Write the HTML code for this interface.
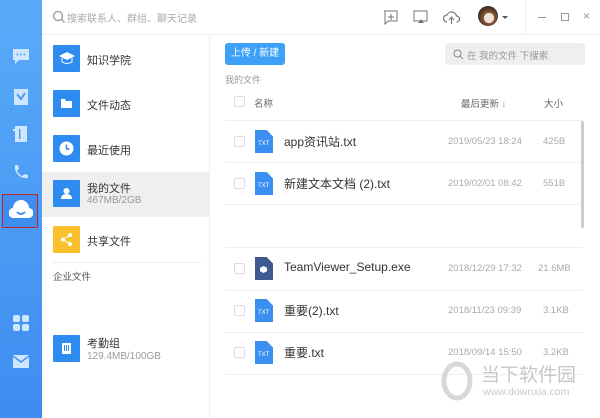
<!DOCTYPE html>
<html><head><meta charset="utf-8"><style>
*{margin:0;padding:0;box-sizing:border-box}
body{width:600px;height:418px;overflow:hidden;background:#fff;font-family:"Liberation Sans","Noto Sans CJK SC",sans-serif;position:relative;color:#333}
.a{position:absolute}
.side{left:0;top:0;width:42px;height:418px;background:linear-gradient(#59abf9,#3e8cf1)}
.ic{position:absolute;left:11px;width:20px;height:18px}
.top{left:42px;top:0;width:558px;height:35px;border-bottom:1px solid #eee;background:#fff}
.mid{left:42px;top:35px;width:168px;height:383px;border-right:1px solid #eee}
.mi{position:absolute;left:11px;width:27px;height:27px;background:#2e8cf0;border-radius:1px}
.mt{position:absolute;left:45px;font-size:11px;color:#333}
.ms{position:absolute;left:45px;font-size:10px;color:#999}
.cb{position:absolute;left:234px;width:11px;height:11px;border:1px solid #ddd;border-radius:2px;background:#fff}
.ln{position:absolute;left:225px;width:358px;height:1px;background:#eee}
.fi{position:absolute;left:255px;width:18px;height:23px;background:#3a8ff0;clip-path:polygon(0 0,65% 0,100% 28%,100% 100%,0 100%)}
.fi span{position:absolute;left:3px;top:11px;font-size:6px;color:#fff}
.fn{position:absolute;left:284px;font-size:12px;color:#333}
.fd{position:absolute;left:448px;font-size:9.5px;color:#aaa}
.fs{position:absolute;font-size:9.5px;color:#aaa}
</style></head><body>
<div class="a side">
 <svg class="ic" style="top:47px" viewBox="0 0 20 18"><path d="M2 2h16v11H8l-4 4v-4H2z" fill="#cfe6ff"/><circle cx="6.5" cy="7.5" r="1" fill="#59abf9"/><circle cx="10" cy="7.5" r="1" fill="#59abf9"/><circle cx="13.5" cy="7.5" r="1" fill="#59abf9"/></svg>
 <svg class="ic" style="top:88px" viewBox="0 0 20 18"><path d="M3 1h14v16H3z" fill="#cfe6ff"/><path d="M6 6l4 5 4-6" stroke="#4a9cf5" stroke-width="2" fill="none"/></svg>
 <svg class="ic" style="top:125px" viewBox="0 0 20 18"><rect x="4" y="1" width="12" height="16" fill="#cfe6ff"/><rect x="2" y="4" width="3" height="2" fill="#cfe6ff"/><rect x="8" y="4" width="1.5" height="10" fill="#4a9cf5"/></svg>
 <svg class="ic" style="top:163px" viewBox="0 0 20 18"><path d="M4 2l3 0 1 4-2 1.5c1 2.5 3 4.5 5.5 5.5L13 11l4 1v3c-8 1-14-5-13-13z" fill="#cfe6ff"/></svg>
 <div class="a" style="left:2px;top:194px;width:36px;height:34px;border:1.5px solid #c0272d;background:#3d8ef0"></div>
 <svg class="a" style="left:9px;top:200px" width="24" height="20" viewBox="0 0 24 20"><path d="M5 18a5 5 0 0 1-1-10 8 8 0 0 1 16 0 5 5 0 0 1-1 10z" fill="#fff"/><path d="M8 12q4 4 8 0" stroke="#3d8ef0" stroke-width="1.8" fill="none"/></svg>
 <svg class="ic" style="top:315px" viewBox="0 0 20 18"><rect x="2" y="0" width="7" height="7" rx="2" fill="#cfe6ff"/><rect x="11" y="0" width="7" height="7" rx="2" fill="#cfe6ff"/><rect x="2" y="9" width="7" height="7" rx="2" fill="#cfe6ff"/><rect x="11" y="9" width="7" height="7" rx="2" fill="#cfe6ff"/></svg>
 <svg class="ic" style="top:353px" viewBox="0 0 20 18"><rect x="2" y="2" width="16" height="13" fill="#cfe6ff"/><path d="M2 3l8 6 8-6" stroke="#4a8ff3" stroke-width="1.5" fill="none"/></svg>
</div>
<div class="a top">
 <svg class="a" style="left:10px;top:10px" width="14" height="14"><circle cx="6" cy="6" r="4.5" stroke="#999" stroke-width="1.3" fill="none"/><path d="M9.5 9.5l3 3" stroke="#999" stroke-width="1.3"/></svg>
 <div class="a" style="left:25px;top:10px;font-size:10px;color:#aaa">搜索联系人、群组、聊天记录</div>
 <svg class="a" style="left:341px;top:10px" width="16" height="15"><path d="M1 1h13v10H5l-3 3V1" stroke="#777" fill="none"/><path d="M8 4v6M5 7h6" stroke="#777"/></svg>
 <svg class="a" style="left:371px;top:10px" width="16" height="15"><rect x="1" y="1" width="13" height="10" stroke="#777" fill="none"/><path d="M5 13l3-4 3 4z" fill="#777"/></svg>
 <svg class="a" style="left:401px;top:10px" width="17" height="15"><path d="M4 12a3.5 3.5 0 0 1 0-7 5 5 0 0 1 9.5 1 3 3 0 0 1 0 6" stroke="#777" fill="none" stroke-width="1.2"/><path d="M8.5 7v7M6 10l2.5-3 2.5 3" stroke="#777" fill="none"/></svg>
 <div class="a" style="left:436px;top:6px;width:20px;height:20px;border-radius:50%;background:radial-gradient(circle at 55% 60%,#f1e2d6 30%,#8a5a3a 32%,#3a2a20 70%)"></div>
 <div class="a" style="left:460px;top:16px;border:3px solid transparent;border-top:3px solid #555"></div>
 <div class="a" style="left:483px;top:0;width:1px;height:35px;background:#eee"></div>
 <div class="a" style="left:496px;top:17px;width:8px;height:1px;background:#999"></div>
 <div class="a" style="left:519px;top:13px;width:8px;height:8px;border:1px solid #999"></div>
 <div class="a" style="left:541px;top:9px;font-size:12px;color:#999">×</div>
</div>
<div class="a mid">
 <div class="mi" style="top:10px"><svg width="27" height="27"><path d="M6 11l8-4 8 4-8 4z" fill="#fff"/><path d="M9 13v4q5 3 10 0v-4" stroke="#fff" fill="none"/></svg></div>
 <div class="mt" style="top:17px">知识学院</div>
 <div class="mi" style="top:55px"><svg width="27" height="27"><path d="M8 9h4l1 2h6v7H8z" fill="#fff"/></svg></div>
 <div class="mt" style="top:62px">文件动态</div>
 <div class="mi" style="top:100px"><svg width="27" height="27"><circle cx="13.5" cy="13.5" r="7" fill="#fff"/><path d="M13.5 9.5v4.5h3" stroke="#2e8cf0" stroke-width="1.5" fill="none"/></svg></div>
 <div class="mt" style="top:107px">最近使用</div>
 <div class="a" style="left:0;top:137px;width:167px;height:45px;background:#efefef"></div>
 <div class="mi" style="top:145px"><svg width="27" height="27"><circle cx="13.5" cy="11" r="3" fill="#fff"/><path d="M8 19q0-5 5.5-5t5.5 5z" fill="#fff"/></svg></div>
 <div class="mt" style="top:145px">我的文件</div>
 <div class="ms" style="top:160px">467MB/2GB</div>
 <div class="mi" style="top:191px;background:#fbc02d"><svg width="27" height="27"><circle cx="17" cy="9" r="2" fill="#fff"/><circle cx="10" cy="13.5" r="2" fill="#fff"/><circle cx="17" cy="18" r="2" fill="#fff"/><path d="M17 9l-7 4.5 7 4.5" stroke="#fff" fill="none"/></svg></div>
 <div class="mt" style="top:198px">共享文件</div>
 <div class="a" style="left:11px;top:227px;width:148px;height:1px;background:#eee"></div>
 <div class="a" style="left:11px;top:234px;font-size:9.5px;color:#555">企业文件</div>
 <div class="mi" style="top:300px"><svg width="27" height="27"><rect x="9" y="8" width="9" height="11" fill="#fff"/><path d="M11.5 10v6M13.5 10v6M15.5 10v6" stroke="#2e8cf0"/></svg></div>
 <div class="mt" style="top:300px">考勤组</div>
 <div class="ms" style="top:316px">129.4MB/100GB</div>
</div>
<div class="a" style="left:225px;top:43px;width:60px;height:22px;background:#3da2f7;border-radius:3px;color:#fff;font-size:10px;text-align:center;line-height:22px">上传 / 新建</div>
<div class="a" style="left:445px;top:43px;width:140px;height:22px;background:#efefef;border-radius:3px"></div>
<svg class="a" style="left:453px;top:49px" width="11" height="11"><circle cx="4.5" cy="4.5" r="3.5" stroke="#888" fill="none"/><path d="M7 7l3 3" stroke="#888"/></svg>
<div class="a" style="left:467px;top:48px;font-size:9.5px;color:#999">在 我的文件 下搜索</div>
<div class="a" style="left:225px;top:73px;font-size:9px;color:#999">我的文件</div>
<div class="cb" style="top:96px"></div>
<div class="a" style="left:254px;top:96px;font-size:9.5px;color:#666">名称</div>
<div class="a" style="left:461px;top:96px;font-size:9.5px;color:#666">最后更新 <span style="color:#3da2f7">↓</span></div>
<div class="a" style="left:544px;top:96px;font-size:9.5px;color:#666">大小</div>
<div class="ln" style="top:120px"></div>
<div class="ln" style="top:162px"></div>
<div class="ln" style="top:204px"></div>
<div class="ln" style="top:247px"></div>
<div class="ln" style="top:290px"></div>
<div class="ln" style="top:332px"></div>
<div class="ln" style="top:374px"></div>
<div class="a" style="left:581px;top:121px;width:3px;height:107px;background:#ccc;border-radius:2px"></div>
<div class="cb" style="top:136px"></div><div class="fi" style="top:130px"><span>TXT</span></div>
<div class="fn" style="top:133px">app资讯站.txt</div><div class="fd" style="top:136px">2019/05/23 18:24</div><div class="fs" style="left:543px;top:136px">425B</div>
<div class="cb" style="top:178px"></div><div class="fi" style="top:172px"><span>TXT</span></div>
<div class="fn" style="top:175px">新建文本文档 (2).txt</div><div class="fd" style="top:178px">2019/02/01 08:42</div><div class="fs" style="left:543px;top:178px">551B</div>
<div class="cb" style="top:263px"></div><div class="fi" style="top:257px;background:#3f5a8e"><span style="left:5px;top:9px;width:7px;height:7px;background:#fff;clip-path:polygon(50% 0,100% 25%,100% 75%,50% 100%,0 75%,0 25%)"></span></div>
<div class="fn" style="top:260px">TeamViewer_Setup.exe</div><div class="fd" style="top:263px">2018/12/29 17:32</div><div class="fs" style="left:538px;top:263px">21.6MB</div>
<div class="cb" style="top:305px"></div><div class="fi" style="top:299px"><span>TXT</span></div>
<div class="fn" style="top:302px">重要(2).txt</div><div class="fd" style="top:305px">2018/11/23 09:39</div><div class="fs" style="left:543px;top:305px">3.1KB</div>
<div class="cb" style="top:347px"></div><div class="fi" style="top:341px"><span>TXT</span></div>
<div class="fn" style="top:344px">重要.txt</div><div class="fd" style="top:347px">2018/09/14 15:50</div><div class="fs" style="left:543px;top:347px">3.2KB</div>
<svg class="a" style="left:440px;top:361px" width="36" height="42"><ellipse cx="17" cy="20" rx="13" ry="17" stroke="#d8d8d8" stroke-width="5" fill="none"/></svg>
<div class="a" style="left:481px;top:360px;font-size:19px;color:#c8c8c8;white-space:nowrap">当下软件园</div>
<div class="a" style="left:483px;top:386px;font-size:10.5px;color:#c8c8c8;white-space:nowrap">www.downxia.com</div>
</body></html>
